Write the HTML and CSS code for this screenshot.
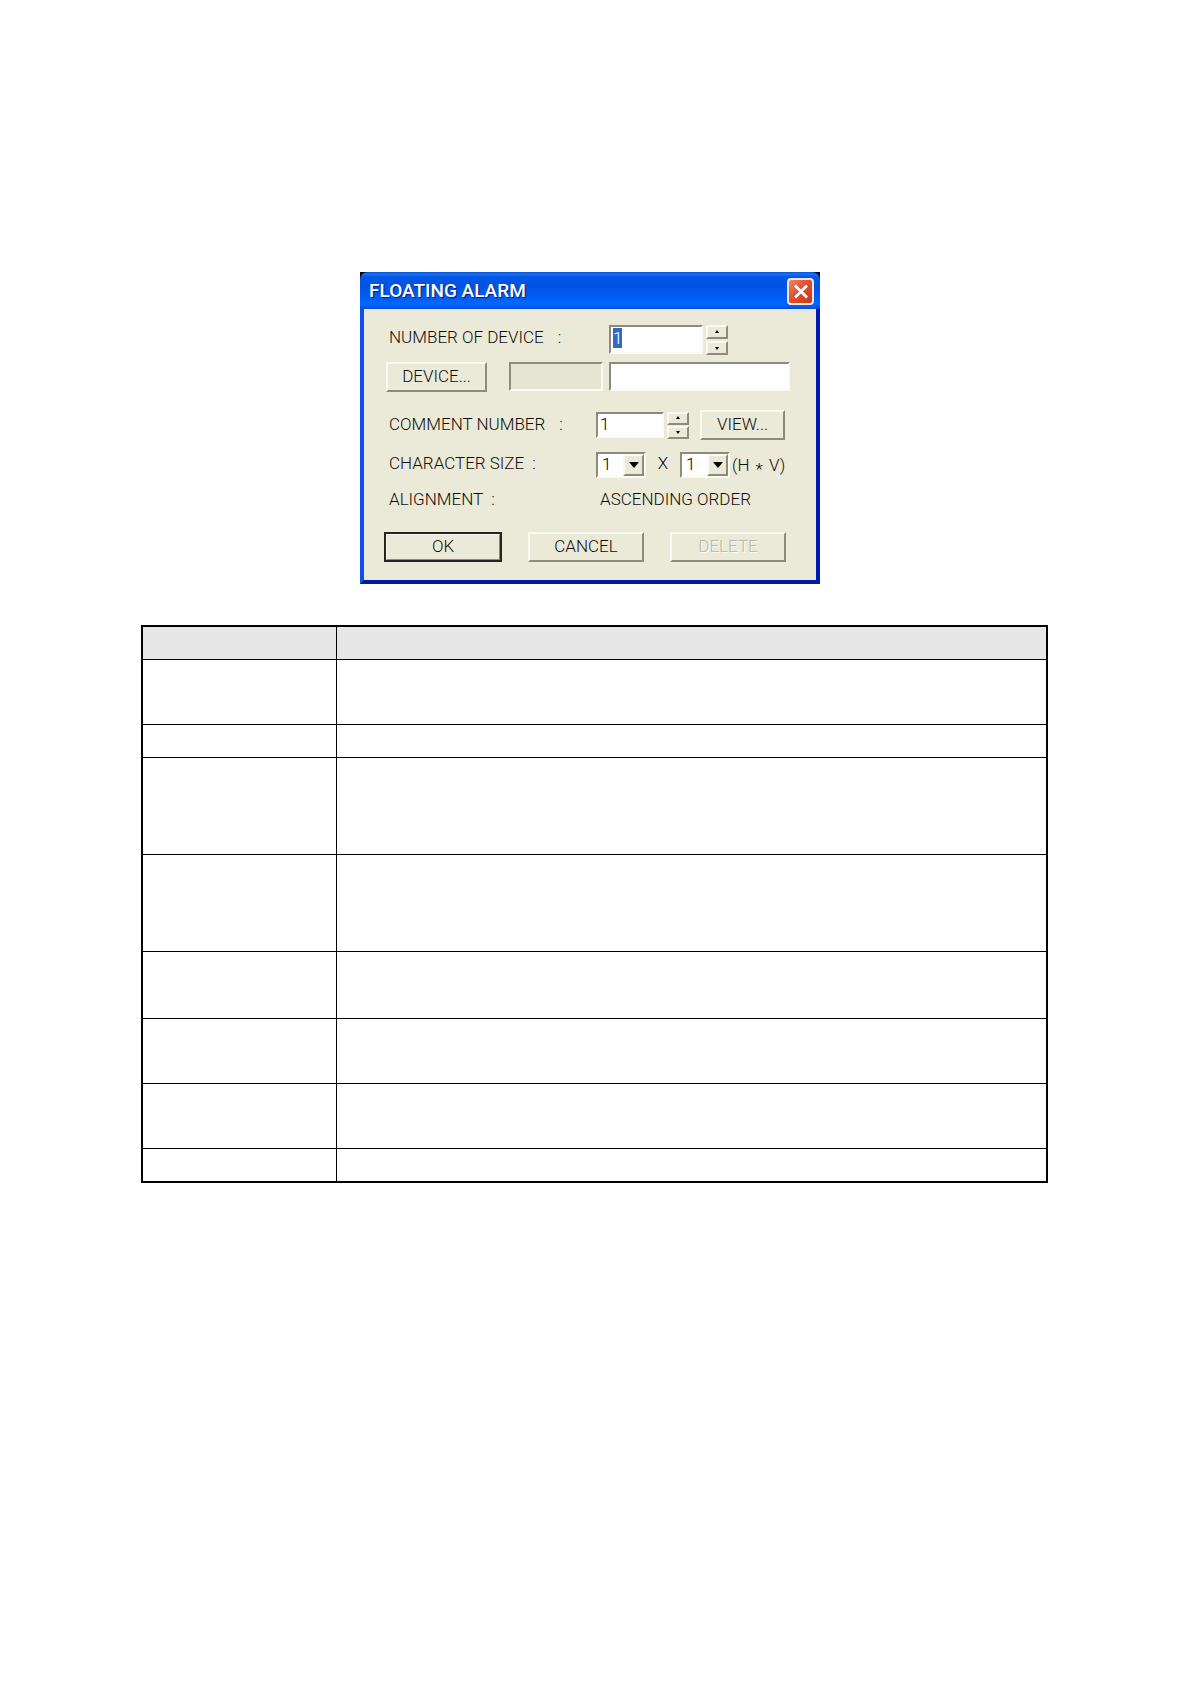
FILE: index.html
```html
<!DOCTYPE html>
<html lang="en">
<head>
<meta charset="utf-8">
<title>Floating Alarm</title>
<link rel="stylesheet" href="styles.css">
</head>
<body>
<main class="page">
  <div class="figure">
    <section class="dialog" aria-labelledby="dialog-title">
      <header class="titlebar">
        <h1 class="title" id="dialog-title">FLOATING ALARM</h1>
        <button class="close" type="button" aria-label="Close">
          <svg viewBox="0 0 22 23" width="22" height="23" aria-hidden="true"><path d="M5 5.500L17 17.500M17 5.500L5 17.500" stroke="#fff" stroke-width="2.800" fill="none"/></svg>
        </button>
      </header>
      <form class="form">
        <div class="row row-count">
          <label class="label label-wide" for="count"><span>NUMBER OF DEVICE</span><span>:</span></label>
          <input class="field field-count" id="count" type="text" value="1">
          <div class="spinner">
            <button class="step" type="button" aria-label="More devices"><svg viewBox="0 0 6 4" width="6" height="4"><path d="M3 0L5 3H1Z"/></svg></button>
            <button class="step" type="button" aria-label="Fewer devices"><svg viewBox="0 0 6 4" width="6" height="4"><path d="M3 4L5 1H1Z"/></svg></button>
          </div>
        </div>
        <div class="row row-device">
          <button class="button button-device" type="button">DEVICE...</button>
          <input class="field field-type" type="text" aria-label="Device type" disabled>
          <input class="field field-address" type="text" aria-label="Device address">
        </div>
        <div class="row row-comment">
          <label class="label" for="comment"><span>COMMENT NUMBER</span><span>:</span></label>
          <input class="field field-comment" id="comment" type="text" value="1">
          <div class="spinner spinner-small">
            <button class="step" type="button" aria-label="Next comment"><svg viewBox="0 0 6 4" width="6" height="4"><path d="M3 0L5 3H1Z"/></svg></button>
            <button class="step" type="button" aria-label="Previous comment"><svg viewBox="0 0 6 4" width="6" height="4"><path d="M3 4L5 1H1Z"/></svg></button>
          </div>
          <button class="button button-view" type="button">VIEW...</button>
        </div>
        <div class="row row-size">
          <label class="label label-tight" for="size-h"><span>CHARACTER SIZE</span><span>:</span></label>
          <span class="combo">
            <select class="select" id="size-h"><option>1</option><option>2</option></select>
            <span class="arrow"><svg viewBox="0 0 10 6" width="10" height="6"><path d="M0 0H10L5 6Z"/></svg></span>
          </span>
          <span class="times">X</span>
          <span class="combo">
            <select class="select" aria-label="Vertical size"><option>1</option><option>2</option></select>
            <span class="arrow"><svg viewBox="0 0 10 6" width="10" height="6"><path d="M0 0H10L5 6Z"/></svg></span>
          </span>
          <span class="hint">(H <span class="star">*</span> V)</span>
        </div>
        <div class="row row-align">
          <span class="label label-tight"><span>ALIGNMENT</span><span>:</span></span>
          <output class="order">ASCENDING ORDER</output>
        </div>
        <div class="row row-actions">
          <button class="button button-default" type="button">OK</button>
          <button class="button" type="button">CANCEL</button>
          <button class="button" type="button" disabled>DELETE</button>
        </div>
      </form>
    </section>
  </div>
  <table class="items">
    <thead>
      <tr class="line-1"><th></th><th></th></tr>
    </thead>
    <tbody>
      <tr class="line-2"><td></td><td></td></tr>
      <tr class="line-1"><td></td><td></td></tr>
      <tr class="line-3"><td></td><td></td></tr>
      <tr class="line-3"><td></td><td></td></tr>
      <tr class="line-2 line-loose"><td></td><td></td></tr>
      <tr class="line-2"><td></td><td></td></tr>
      <tr class="line-2"><td></td><td></td></tr>
      <tr class="line-last"><td></td><td></td></tr>
    </tbody>
  </table>
</main>
<script src="dialog.js"></script>
</body>
</html>
```
FILE: styles.css
```css
* {
  box-sizing: border-box;
}

body {
  margin: 0;
  background: #fff;
  color: #100e08;
  font-family: Roboto, "Liberation Sans", sans-serif;
  font-size: 17px;
  font-weight: 300;
  line-height: 20px;
}

button,
input,
select {
  margin: 0;
  padding: 0;
  border-radius: 0;
  color: inherit;
  font: inherit;
}

.page {
  padding: 272px 143px 100px 141px;
}

.figure {
  display: flex;
  justify-content: center;
  padding-right: 9px;
  margin-bottom: 41px;
}

/* Dialog window */
.dialog {
  width: 460px;
  background: #00061c;
}

.titlebar {
  display: flex;
  align-items: center;
  justify-content: space-between;
  height: 37px;
  padding: 2px 6px 0 9px;
  border-radius: 8px 8px 0 0;
  background: linear-gradient(#0a4fd0 0, #1a70f4 2px, #0058e6 5px, #0053e1 14px, #005cf4 24px, #0068ff 32px, #004fdc 37px);
}

.title {
  margin: 0;
  padding-bottom: 2px;
  color: #fff;
  font-size: 19px;
  font-weight: 500;
  line-height: 20px;
  text-shadow: 1px 1px 1px #0a1883;
}

.close {
  display: flex;
  align-items: center;
  justify-content: center;
  width: 27px;
  height: 27px;
  border: 2px solid #f4e4e4;
  border-radius: 4px;
  background: linear-gradient(135deg, #ec8a6c, #e05030 45%, #c83a14);
}

.form {
  padding: 16px 26px 18px 22px;
  border: solid;
  border-width: 0 4px 4px;
  border-color: #0018ac #0018b4 #0018a8 #0c50e8;
  background: #ebe9d8;
}

.row {
  display: flex;
  align-items: flex-start;
}

.label {
  display: flex;
  flex: none;
  gap: 14px;
  width: 210px;
  padding-left: 3px;
}

.label-wide {
  width: 223px;
}

.label-tight {
  gap: 8px;
}

.row-count .label {
  line-height: 24px;
}

.row-device {
  margin-top: 7px;
}

.row-comment {
  align-items: center;
  margin-top: 18px;
}

.row-comment .label {
  padding-bottom: 2px;
}

.row-size {
  align-items: center;
  margin-top: 12px;
}

.row-size .label {
  padding-bottom: 4px;
}

.row-align {
  margin-top: 11px;
}

.row-actions {
  justify-content: space-between;
  margin: 23px 4px 0 -2px;
}

/* Sunken fields */
.field,
.combo {
  border: 2px solid;
  border-color: #8e8b7c #fbfaf4 #fbfaf4 #8e8b7c;
  background: #fff;
  color: #000;
}

.field {
  flex: none;
  height: 29px;
  outline: none;
}

.field::selection {
  background: #316ac5;
  color: #fff;
}

.field-count {
  width: 94px;
  padding: 0 0 4px 2px;
}

.field-type {
  width: 94px;
  margin-left: 22px;
  background: #e6e4d3;
}

.field-address {
  width: 181px;
  margin-left: 6px;
}

.field-comment {
  width: 68px;
  height: 26px;
  padding: 0 0 2px 2px;
}

/* Raised controls */
.button,
.step,
.arrow {
  flex: none;
  border: 2px solid;
  border-color: #fbfaf2 #8e8b7c #8e8b7c #fbfaf2;
  background: #ebe9d8;
}

.button {
  width: 116px;
  height: 30px;
  padding-bottom: 2px;
}

.button:disabled {
  color: #b9b6a6;
  text-shadow: 1px 1px 0 #fbfaf2;
}

.button-device {
  width: 101px;
}

.button-view {
  width: 85px;
  margin-left: 11px;
}

.button-default {
  width: 118px;
  outline: 2px solid #26241c;
  outline-offset: -2px;
  border-width: 3px;
}

.spinner {
  display: flex;
  flex-direction: column;
  gap: 2px;
  margin-left: 3px;
}

.step {
  display: flex;
  align-items: center;
  justify-content: center;
  width: 22px;
  height: 14px;
}

.spinner-small {
  gap: 1px;
}

.spinner-small .step {
  height: 13px;
}

.combo {
  position: relative;
  flex: none;
  width: 50px;
  height: 26px;
}

.select {
  display: block;
  width: 100%;
  height: 100%;
  padding: 0 0 2px 4px;
  border: 0;
  appearance: none;
  background: transparent;
}

.arrow {
  position: absolute;
  inset: 0 0 0 auto;
  display: flex;
  align-items: center;
  justify-content: center;
  width: 21px;
  pointer-events: none;
}

.times {
  width: 34px;
  padding-bottom: 4px;
  text-align: center;
}

.hint {
  padding-left: 2px;
  white-space: nowrap;
}

.star {
  display: inline-block;
  padding: 0 2px;
  line-height: 12px;
  vertical-align: -4px;
}

.order {
  padding-left: 4px;
}

/* Description table */
.items {
  width: 100%;
  border: 2px solid #000;
  border-spacing: 0;
  table-layout: fixed;
}

.items th,
.items td {
  padding: 0;
  border-bottom: 1px solid #000;
}

.items th {
  background: #e6e6e6;
}

.items th:first-child,
.items td:first-child {
  width: 194px;
  border-right: 1px solid #000;
}

.line-1 {
  height: 33px;
}

.line-2 {
  height: 65px;
}

.line-3 {
  height: 97px;
}

.line-loose {
  height: 67px;
}

.line-last {
  height: 32px;
}

.items .line-last td {
  border-bottom: 0;
}
```
FILE: dialog.js
```js
const count = document.getElementById("count");
count.focus();
count.select();
```
